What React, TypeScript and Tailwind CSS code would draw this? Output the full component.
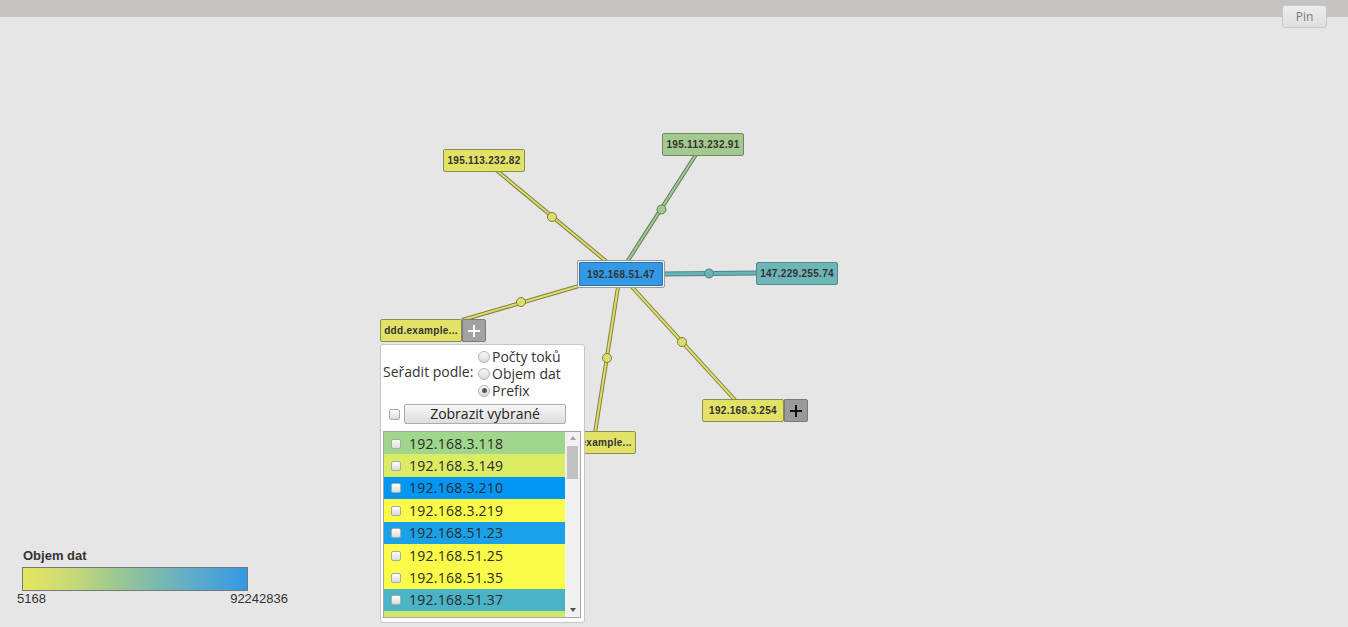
import React from "react";

type Node = {
  label: string;
  left: number;
  top: number;
  bg: string;
  plus?: "light" | "dark";
};

// yellow / green / teal nodes around the selected host
const nodes: Node[] = [
  { label: "195.113.232.82", left: 443, top: 149, bg: "yellow" },
  { label: "195.113.232.91", left: 662, top: 133, bg: "green" },
  { label: "147.229.255.74", left: 756, top: 262, bg: "teal" },
  { label: "ddd.example...", left: 380, top: 319, bg: "yellow", plus: "light" },
  { label: "192.168.3.254", left: 702, top: 399, bg: "yellow", plus: "dark" },
  { label: "ddd.example...", left: 554, top: 431, bg: "yellow" },
];

const edges = [
  { x1: 495, y1: 169, x2: 607, y2: 262, dx: 552, dy: 217, c: "y" },
  { x1: 697, y1: 153, x2: 627, y2: 262, dx: 661.5, dy: 209.5, c: "g" },
  { x1: 663, y1: 274, x2: 758, y2: 273, dx: 709, dy: 273.5, c: "t" },
  { x1: 462, y1: 320, x2: 579, y2: 286, dx: 521, dy: 302, c: "y" },
  { x1: 618, y1: 287, x2: 595, y2: 433, dx: 607, dy: 358, c: "y" },
  { x1: 632, y1: 287, x2: 735, y2: 400, dx: 682, dy: 342, c: "y" },
];

const edgeColors: Record<string, { fill: string; dark: string }> = {
  y: { fill: "#dede66", dark: "#7d7d48" },
  g: { fill: "#a3c98f", dark: "#5f7d58" },
  t: { fill: "#6bb4b6", dark: "#4a8587" },
};

const rows = [
  { ip: "192.168.3.118", bg: "bg-[#a0d68c]" },
  { ip: "192.168.3.149", bg: "bg-[#dbeb62]" },
  { ip: "192.168.3.210", bg: "bg-[#0096f4]" },
  { ip: "192.168.3.219", bg: "bg-[#fafa48]" },
  { ip: "192.168.51.23", bg: "bg-[#1aa1ea]" },
  { ip: "192.168.51.25", bg: "bg-[#fafa48]" },
  { ip: "192.168.51.35", bg: "bg-[#fafa48]" },
  { ip: "192.168.51.37", bg: "bg-[#4ab3c6]" },
];

function GraphNode({ n }: { n: Node }) {
  const color =
    n.bg === "green"
      ? "bg-[#a3c98f] border-[#6e8c64]"
      : n.bg === "teal"
      ? "bg-[#6db5b7] border-[#4f8a8c]"
      : "bg-[#e2e266] border-[#8c8c52]";
  return (
    <div
      className="absolute flex h-[23px]"
      style={{ left: n.left, top: n.top }}
    >
      <div
        className={`flex h-full w-[82px] items-center justify-center rounded-[2px] border ${color} font-['Liberation_Sans',Arial,sans-serif] text-[10px] font-bold tracking-[0.3px] text-[#333]`}
      >
        {n.label}
      </div>
      {n.plus && (
        <div
          className={`flex h-full w-[24px] items-center justify-center rounded-r-[2px] border border-[#7a7a7a] ${
            n.plus === "light" ? "bg-[#a2a2a2] text-white" : "bg-[#9a9a9a] text-[#111]"
          }`}
        >
          <svg width="14" height="14" viewBox="0 0 14 14">
            <path d="M7 1v12M1 7h12" stroke="currentColor" strokeWidth="2" />
          </svg>
        </div>
      )}
    </div>
  );
}

function Box({ size = 10 }: { size?: number }) {
  return (
    <span
      className="inline-block shrink-0 rounded-[2px] border border-[#a9a9a9] bg-gradient-to-b from-[#fdfdfd] to-[#dcdcdc]"
      style={{ width: size, height: size }}
    />
  );
}

function Radio({ checked }: { checked?: boolean }) {
  return (
    <span className="flex h-[12px] w-[12px] shrink-0 items-center justify-center rounded-full border border-[#b5b5b5] bg-gradient-to-b from-[#fafafa] to-[#dadada]">
      {checked && <span className="h-[5px] w-[5px] rounded-full bg-[#555]" />}
    </span>
  );
}

export default function App() {
  return (
    <div className="relative h-[627px] w-[1348px] overflow-hidden bg-[#e6e6e6] font-['Open_Sans',sans-serif]">
      <div className="h-[17px] bg-[#c5c4c2]" />

      {/* graph canvas */}
      <svg className="absolute left-0 top-0" width="1348" height="627">
        {edges.map((e, i) => {
          const c = edgeColors[e.c];
          return (
            <g key={i}>
              <line x1={e.x1} y1={e.y1} x2={e.x2} y2={e.y2} stroke={c.dark} strokeWidth={e.c === "t" ? 5 : 4} />
              <line x1={e.x1} y1={e.y1} x2={e.x2} y2={e.y2} stroke={c.fill} strokeWidth={e.c === "t" ? 3 : 2} />
              <circle cx={e.dx} cy={e.dy} r="4.5" fill={c.fill} stroke={c.dark} strokeWidth="1" />
            </g>
          );
        })}
      </svg>

      {nodes.map((n, i) => (
        <GraphNode key={i} n={n} />
      ))}

      {/* selected node */}
      <div className="absolute left-[577px] top-[260px] flex h-[28px] w-[88px] items-center justify-center rounded-[2px] border border-[#9a9a9a] bg-[#f3f3f3]">
        <div className="flex h-[24px] w-[84px] items-center justify-center rounded-[1px] border border-[#2a72ad] bg-[#3399e6] font-['Liberation_Sans',Arial,sans-serif] text-[10px] font-bold tracking-[0.3px] text-[#333]">
          192.168.51.47
        </div>
      </div>

      {/* node menu */}
      <div className="absolute left-[380px] top-[344px] h-[279px] w-[205px] rounded-[3px] border border-[#c6c6c6] bg-white text-[14px] text-[#333]">
        <div className="flex pl-[2px] pt-[3px]">
          <span className="mt-[15px] w-[95px] leading-[17px]">Seřadit podle:</span>
          <div className="flex flex-col">
            {["Počty toků", "Objem dat", "Prefix"].map((l, i) => (
              <label key={l} className="flex h-[17px] items-center">
                <Radio checked={i === 2} />
                <span className="ml-[2px] leading-[17px]">{l}</span>
              </label>
            ))}
          </div>
        </div>
        <div className="mt-[5px] flex items-center pl-[8px]">
          <Box size={11} />
          <button className="ml-[4px] h-[20px] w-[162px] rounded-[2px] border border-[#acacac] bg-gradient-to-b from-[#f7f7f7] to-[#dddddd] text-[14px] leading-[18px] text-[#222]">
            Zobrazit vybrané
          </button>
        </div>
        <div className="ml-[2px] mt-[7px] flex h-[187px] w-[198px] border border-[#a6a6a6] bg-white">
          <div className="flex-1 overflow-hidden">
            {rows.map((r) => (
              <div key={r.ip} className={`flex h-[22.4px] shrink-0 items-center ${r.bg}`}>
                <span className="ml-[7px]">
                  <Box />
                </span>
                <span className="ml-[8px] tracking-[0.25px] text-[#2a2a2a]">{r.ip}</span>
              </div>
            ))}
            <div className="h-[22.4px] bg-[#cfe86a]" />
          </div>
          <div className="flex w-[15px] flex-col items-center bg-[#f1f1f1]">
            <span className="mt-[4px] h-0 w-0 border-x-[3.5px] border-b-[4px] border-x-transparent border-b-[#a3a3a3]" />
            <span className="mt-[6px] h-[33px] w-[11px] bg-[#c1c1c1]" />
            <span className="flex-1" />
            <span className="mb-[5px] h-0 w-0 border-x-[3.5px] border-t-[4px] border-x-transparent border-t-[#505050]" />
          </div>
        </div>
      </div>

      {/* legend */}
      <div className="absolute left-[17px] top-[548px] w-[271px] font-['Liberation_Sans',Arial,sans-serif] text-[#333]">
        <div className="ml-[6px] text-[13px] font-bold leading-[16px]">Objem dat</div>
        <div className="ml-[5px] mt-[3px] h-[24px] w-[226px] border border-[#777] bg-[linear-gradient(to_right,#e6e65c_0%,#c6d979_22%,#9fc990_40%,#84bda7_55%,#5fadc8_75%,#3399e6_100%)]" />
        <div className="flex justify-between text-[13px] leading-[16px]">
          <span>5168</span>
          <span>92242836</span>
        </div>
      </div>

      {/* pin */}
      <button className="absolute left-[1282px] top-[5px] h-[23px] w-[45px] rounded-[3px] border border-[#c9c9c9] bg-gradient-to-b from-[#ececec] to-[#e0e0e0] text-[12px] text-[#7a7a7a]">
        Pin
      </button>
    </div>
  );
}
